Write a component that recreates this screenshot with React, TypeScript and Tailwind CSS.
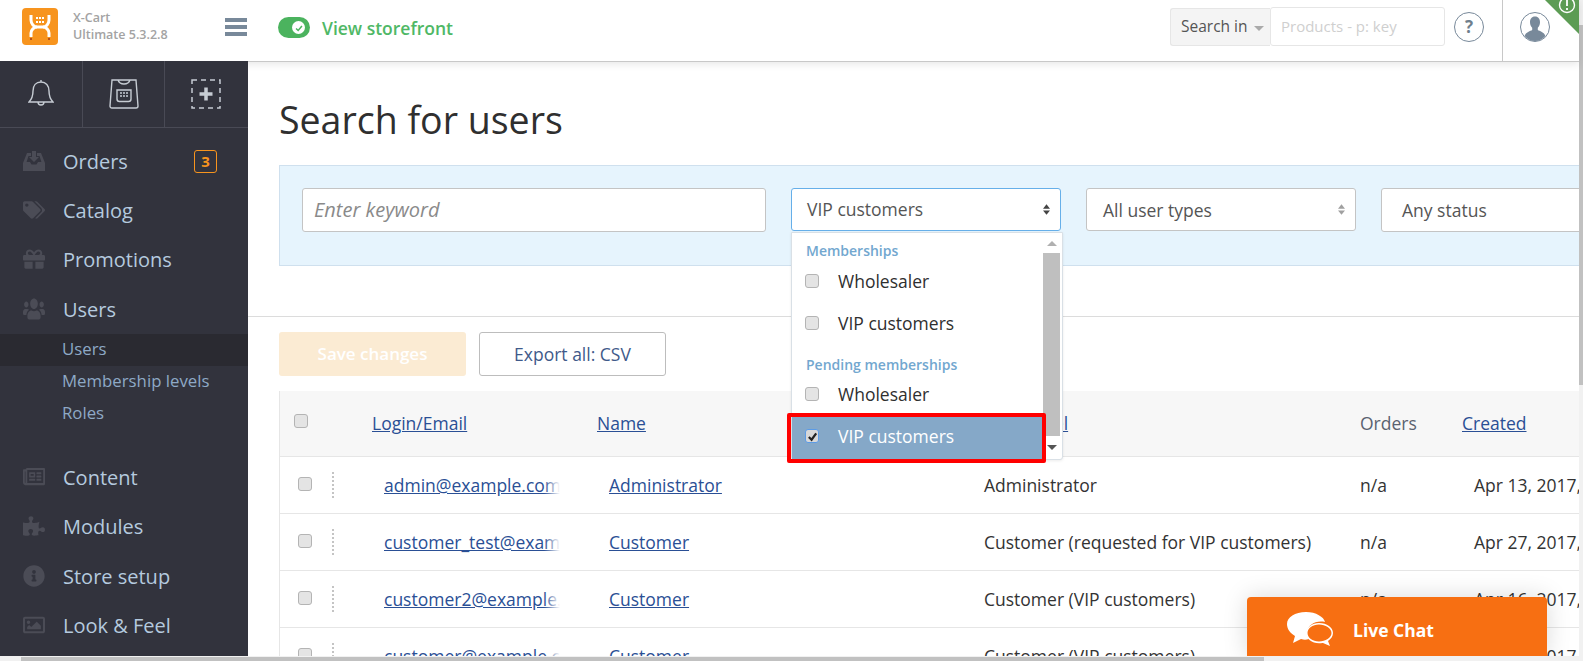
import { FaGift, FaInfoCircle, FaPuzzlePiece, FaRegImage, FaRegNewspaper, FaTags, FaUsers } from "react-icons/fa";
import type { ReactNode } from "react";

function InboxIcon() {
  return (
    <svg viewBox="0 0 22 20" className="h-[20px] w-[22px]" fill="#4b4c56">
      <path d="M4 2h4v3H5.500L3.600 11H7l1.500 2.500h5L15 11h3.400l-1.900-6H14V2h4l4 10v8H0v-8z" />
      <path d="M9 0h4v6h3l-5 5-5-5h3z" />
    </svg>
  );
}

const mainNav: { label: string; icon: ReactNode }[] = [
  { label: "Orders", icon: <InboxIcon /> },
  { label: "Catalog", icon: <FaTags size={22} color="#4b4c56" /> },
  { label: "Promotions", icon: <FaGift size={22} color="#4b4c56" /> },
  { label: "Users", icon: <FaUsers color="#4b4c56" className="h-[24px] w-[22px]" preserveAspectRatio="none" /> },
];

const lowerNav: { label: string; icon: ReactNode }[] = [
  { label: "Content", icon: <FaRegNewspaper color="#4b4c56" className="h-[23px] w-[22px]" preserveAspectRatio="none" /> },
  { label: "Modules", icon: <FaPuzzlePiece size={22} color="#4b4c56" /> },
  { label: "Store setup", icon: <FaInfoCircle size={22} color="#4b4c56" /> },
  { label: "Look & Feel", icon: <FaRegImage size={22} color="#4b4c56" /> },
];

const rows = [
  { email: "admin@example.com", name: "Administrator", level: "Administrator", date: "Apr 13, 2017, 10:15" },
  { email: "customer_test@example.com", name: "Customer", level: "Customer (requested for VIP customers)", date: "Apr 27, 2017, 12:40" },
  { email: "customer2@example.com", name: "Customer", level: "Customer (VIP customers)", date: "Apr 16, 2017, 09:20" },
  { email: "customer@example.com", name: "Customer", level: "Customer (VIP customers)", date: "Apr 13, 2017, 10:15" },
];

function Checkbox({ checked }: { checked?: boolean }) {
  if (checked) {
    return (
      <span className="flex h-[14px] w-[14px] items-center justify-center rounded-[3px] border border-[#5b9be6] bg-[#d8d8d8]">
        <svg viewBox="0 0 12 12" className="h-[11px] w-[11px]" fill="none" stroke="#222" strokeWidth="2.4">
          <path d="M2 6.500l3 3 5-7" />
        </svg>
      </span>
    );
  }
  return <span className="block h-[14px] w-[14px] rounded-[3px] border border-[#b4b4b4] bg-[#e4e4e4]" />;
}

function Logo() {
  return (
    <svg viewBox="0 0 36 37" className="h-[37px] w-[36px]">
      <rect width="36" height="37" rx="4" fill="#f7941e" />
      <g fill="none" stroke="#fff" strokeWidth="3">
        <path d="M9 7v5c0 4 3 7 6 7h6c3 0 6-3 6-7V7" />
        <path d="M15 19c-3 0-6 3-6 6v4M21 19c3 0 6 3 6 6v4" />
      </g>
      <g fill="#fff">
        <rect x="14" y="9" width="2" height="2" />
        <rect x="17" y="9" width="2" height="2" />
        <rect x="20" y="9" width="2" height="2" />
        <rect x="14" y="13" width="2" height="2" />
        <rect x="17" y="13" width="2" height="2" />
        <rect x="20" y="13" width="2" height="2" />
      </g>
      <rect x="8" y="30" width="2" height="2" fill="#b5521a" />
      <rect x="26" y="30" width="2" height="2" fill="#b5521a" />
    </svg>
  );
}

function Header() {
  return (
    <header className="relative z-10 flex h-[62px] shrink-0 items-start overflow-hidden border-b border-[#c8c8c8] bg-white shadow-[0_2px_8px_rgba(0,0,0,0.1)]">
      <div className="ml-[22px] mt-[8px]">
        <Logo />
      </div>
      <div className="ml-[15px] mt-[9px] w-[98px] text-[12.500px] font-semibold leading-[17px] text-[#a3a3a3]">
        <div>X-Cart</div>
        <div>Ultimate 5.3.2.8</div>
      </div>
      <div className="ml-[54px] mt-[18px] flex flex-col gap-[3px]">
        <span className="h-[4px] w-[22px] bg-[#78899a]" />
        <span className="h-[4px] w-[22px] bg-[#78899a]" />
        <span className="h-[4px] w-[22px] bg-[#78899a]" />
      </div>
      <div className="ml-[31px] mt-[17px] flex h-[21px] w-[32px] items-center justify-end rounded-full bg-[#4bb35e] pr-[5px]">
        <span className="flex h-[13px] w-[13px] items-center justify-center rounded-full bg-white">
          <svg viewBox="0 0 12 12" className="h-[10px] w-[10px]" fill="none" stroke="#4bb35e" strokeWidth="1.800">
            <path d="M2.500 6.500l2.500 2.500 4.500-5.500" />
          </svg>
        </span>
      </div>
      <a className="ml-[12px] mt-[16px] text-[17.500px] font-semibold leading-[24px] text-[#4fb866]">View storefront</a>

      <div className="ml-auto mt-[8px] flex h-[38px] w-[100px] items-center rounded-l-[3px] border border-r-0 border-[#e6e6e6] bg-[#f4f4f4] pl-[10px] text-[15.500px] font-medium text-[#555]">
        Search in
        <span className="ml-[6px] mt-[3px] h-0 w-0 border-x-[5px] border-t-[5px] border-x-transparent border-t-[#aaa]" />
      </div>
      <div className="mt-[7px] flex h-[39px] w-[175px] items-center rounded-[3px] border border-[#e6e6e6] pl-[10px] text-[15px] text-[#cfcfcf]">
        Products - p: key
      </div>
      <div className="ml-[9px] mt-[12px] flex h-[30px] w-[30px] items-center justify-center rounded-full border border-[#78899a] text-[17px] font-bold text-[#6f7f8d]">
        ?
      </div>
      <div className="ml-[18px] h-[61px] w-px bg-[#c8c8c8]" />
      <svg viewBox="0 0 30 30" className="ml-[17px] mr-[29px] mt-[12px] h-[30px] w-[30px]">
        <circle cx="15" cy="15" r="14.500" fill="none" stroke="#78899a" />
        <path d="M15 4.500c3.400 0 5 2.600 5 5.700 0 2.400-1 4.400-2.200 5.600v2.200c1.600 1.100 6.600 2 7.600 6A14 14 0 0 1 15 29 14 14 0 0 1 4.600 24c1-4 6-4.900 7.600-6v-2.200c-1.200-1.200-2.200-3.200-2.200-5.600 0-3.100 1.600-5.700 5-5.700z" fill="#78899a" />
      </svg>
      <svg viewBox="0 0 34 34" className="absolute right-0 top-0 h-[34px] w-[34px]">
        <path d="M0 0h34v34z" fill="#5c9c54" />
        <circle cx="22" cy="5" r="7.500" fill="none" stroke="#fff" strokeWidth="1.400" />
        <path d="M22 0v6M22 8v2" stroke="#fff" strokeWidth="1.800" />
      </svg>
    </header>
  );
}

function NavItem({ label, icon, badge }: { label: string; icon: ReactNode; badge?: string }) {
  return (
    <div className="flex h-[49px] items-center pl-[23px] text-[20px] text-[#b5cadf]">
      <span className="-mt-[2px] flex w-[40px] shrink-0 items-center">{icon}</span>
      {label}
      {badge && (
        <span className="ml-auto mr-[31px] flex h-[23px] w-[23px] items-center justify-center rounded-[3px] border border-[#f7941e] text-[15px] font-bold text-[#f7941e]">
          {badge}
        </span>
      )}
    </div>
  );
}

function Sidebar() {
  return (
    <aside className="relative z-20 -mt-px w-[248px] shrink-0 bg-[#32333d]">
      <div className="flex h-[67px] border-b border-[#494a55]">
        <div className="flex w-[83px] items-center justify-center border-r border-[#494a55]">
          <svg viewBox="0 0 26 30" className="h-[30px] w-[26px]" fill="none" stroke="#c6ccd3" strokeWidth="1.400">
            <path d="M13 3c-5 0-8 3.500-8 9 0 6-2 9-4 11h24c-2-2-4-5-4-11 0-5.500-3-9-8-9zM13 1v2M10 23c0 2 1.500 3 3 3s3-1 3-3" />
          </svg>
        </div>
        <div className="flex w-[82px] items-center justify-center border-r border-[#494a55]">
          <svg viewBox="0 0 30 30" className="h-[30px] w-[30px]" fill="none" stroke="#c6ccd3" strokeWidth="1.400">
            <path d="M3 1h24l2 26c0 1-.5 2-2 2H3c-1.500 0-2-1-2-2zM9 1c1 3 3 4 6 4s5-1 6-4" />
            <path d="M8 11h14v9c0 1.500-1 2.500-2.500 2.500h-9C9 22.500 8 21.500 8 20z" />
            <path d="M11 14h2M14 14h2M17 14h2M11 17h2M14 17h2M17 17h2" strokeWidth="1.600" />
          </svg>
        </div>
        <div className="flex flex-1 items-center justify-center pr-[2px]">
          <svg viewBox="0 0 30 30" className="h-[30px] w-[30px]" fill="none" stroke="#c6ccd3">
            <rect x="1" y="1" width="28" height="28" strokeWidth="1.500" strokeDasharray="5 4" />
            <path d="M15 8.500v13M8.500 15h13" strokeWidth="3.500" />
          </svg>
        </div>
      </div>
      <nav className="pt-[9px]">
        <div className="[&>*:nth-child(4)]:pt-[2px]">
          <NavItem {...mainNav[0]} badge="3" />
          {mainNav.slice(1).map((item) => (
            <NavItem key={item.label} {...item} />
          ))}
        </div>
        <div className="mt-px text-[16.800px] text-[#8ea9c6]">
          <div className="flex h-[32px] items-center bg-[#2a2a31] pb-[2px] pl-[62px]">Users</div>
          <div className="flex h-[32px] items-center pb-[2px] pl-[62px]">Membership levels</div>
          <div className="flex h-[32px] items-center pb-[2px] pl-[62px]">Roles</div>
        </div>
        <div className="mt-[23px] [&>*:nth-child(3)]:mt-px">
          {lowerNav.map((item) => (
            <NavItem key={item.label} {...item} />
          ))}
        </div>
      </nav>
    </aside>
  );
}

function SelectArrows({ color }: { color: string }) {
  return (
    <svg viewBox="0 0 8 12" className="h-[11px] w-[7px]" fill={color}>
      <path d="M4 0l4 5H0zM4 12L0 7h8z" />
    </svg>
  );
}

function Option({ label, checked }: { label: string; checked?: boolean }) {
  return (
    <div className={`flex h-[42px] items-center pl-[13px] text-[17.500px] ${checked ? "bg-[#85a8c8] text-white" : "text-[#2f2f2f]"}`}>
      <Checkbox checked={checked} />
      <span className="ml-[19px]">{label}</span>
    </div>
  );
}

function MembershipDropdown() {
  return (
    <div className="absolute left-0 top-[44px] flex h-[228px] w-[272px] rounded-b-[3px] border border-[#d9e0e6] bg-white shadow-[0_1px_3px_rgba(0,0,0,0.08)]">
      <div className="w-[251px]">
        <div className="h-[27px] pl-[14px] pt-[9px] text-[14px] font-semibold leading-[18px] text-[#72a7cf]">Memberships</div>
        <Option label="Wholesaler" />
        <Option label="VIP customers" />
        <div className="h-[29px] pl-[14px] pt-[12px] text-[14px] font-semibold leading-[18px] text-[#72a7cf]">Pending memberships</div>
        <Option label="Wholesaler" />
        <div className="bg-[#85a8c8] pb-[2px]">
          <Option label="VIP customers" checked />
        </div>
      </div>
      <div className="flex w-[17px] flex-col items-center">
        <div className="flex h-[20px] w-full items-center justify-center">
          <span className="h-0 w-0 border-x-[5px] border-b-[5px] border-x-transparent border-b-[#b0b0b0]" />
        </div>
        <div className="h-[183px] w-full bg-[#bfbfbf]" />
        <div className="flex w-full flex-1 items-center justify-center">
          <span className="h-0 w-0 border-x-[5px] border-t-[5px] border-x-transparent border-t-[#555]" />
        </div>
      </div>
      {/* red highlight added on top of the screenshot */}
      <div className="absolute left-[-5px] top-[180px] h-[50px] w-[259px] rounded-[2px] border-[4px] border-[#ff0000]" />
    </div>
  );
}

function SearchPanel() {
  return (
    <section className="relative z-20 ml-[31px] flex h-[101px] items-start gap-[25px] border-y border-l border-[#cfe0ee] bg-[#e6f4fd] pl-[22px] pt-[22px] text-[17.500px] text-[#555]">
      <div className="flex h-[44px] w-[464px] shrink-0 items-center rounded-[3px] border border-[#c4c4c4] bg-white pl-[11px] text-[20px] italic text-[#8a8a8a]">
        Enter keyword
      </div>
      <div className="relative w-[270px] shrink-0">
        <div className="flex h-[43px] items-center justify-between rounded-[3px] border border-[#66afe9] bg-white pl-[15px] pr-[10px]">
          VIP customers
          <SelectArrows color="#444" />
        </div>
        <MembershipDropdown />
      </div>
      <div className="flex h-[43px] w-[270px] shrink-0 items-center justify-between rounded-[3px] border border-[#c4c4c4] bg-white pl-[16px] pr-[10px]">
        <span className="pt-[2px]">All user types</span>
        <SelectArrows color="#a0a0a0" />
      </div>
      <div className="flex h-[44px] w-[260px] shrink-0 items-center rounded-l-[3px] border border-[#c4c4c4] bg-white pl-[20px]">
        Any status
      </div>
    </section>
  );
}

function UsersTable() {
  return (
    <div className="ml-[31px] mt-[15px] w-[1400px] border-l border-[#e6e6e6] text-[17.500px]">
      <div className="grid h-[66px] grid-cols-[92px_225px_375px_388px_102px_1fr] items-center border-b border-[#e6e6e6] bg-[#f7f7f7]">
        <div className="pb-[6px] pl-[14px]">
          <Checkbox />
        </div>
        <a className="text-[#2a4f95] underline">Login/Email</a>
        <a className="text-[#2a4f95] underline">Name</a>
        <a className="text-[#2a4f95] underline">Access level</a>
        <span className="text-[#5a6270]">Orders</span>
        <a className="text-[#2a4f95] underline">Created</a>
      </div>
      {rows.map((row) => (
        <div key={row.email} className="grid h-[57px] grid-cols-[92px_225px_375px_388px_102px_1fr] items-center border-b border-[#e6e6e6] text-[#333]">
          <div className="flex items-center pl-[18px]">
            <div className="-mt-[2px]">
              <Checkbox />
            </div>
            <span className="ml-[20px] h-[26px] border-l-2 border-dotted border-[#c4c4c4]" />
          </div>
          <div className="relative overflow-hidden pl-[12px] pr-[37px]">
            <a className="block overflow-hidden whitespace-nowrap text-[#2a4f95] underline">{row.email}</a>
            <span className="absolute bottom-0 right-[37px] top-0 w-[16px] bg-gradient-to-r from-transparent to-white" />
          </div>
          <a className="pl-[12px] text-[#2a4f95] underline">{row.name}</a>
          <span className="pl-[12px]">{row.level}</span>
          <span>n/a</span>
          <span className="whitespace-nowrap pl-[12px]">{row.date}</span>
        </div>
      ))}
    </div>
  );
}

function LiveChat() {
  return (
    <div className="absolute left-[999px] top-[535px] flex h-[60px] w-[300px] items-start rounded-t-[4px] bg-[#f76f12] pl-[40px] pt-[15px] shadow-[0_0_24px_rgba(0,0,0,0.15)]">
      <svg viewBox="0 0 46 34" className="h-[34px] w-[46px]" fill="#fff">
        <path d="M19 0c10 0 18 5 19 10-9-2-18 3-18 11 0 2 .5 4 2 6-3 1-5 1-8 0l-8 4 2-7C3 21 0 17 0 12 0 5 8 0 19 0z" />
        <path d="M32 11c8 0 14 4.500 14 10 0 3-2 6-5 8l2 5-7-3c-1 0-3 .3-4 .3-7 0-13-4.500-13-10.300 0-5.500 6-10 13-10zm0 1.500c-6.500 0-11.500 3.800-11.500 8.500 0 4.700 5 8.500 11.500 8.500 6.500 0 12.500-3.800 12.500-8.500 0-4.700-6-8.500-12.500-8.500z" />
      </svg>
      <span className="ml-[20px] mt-[6px] text-[17.500px] font-bold leading-[24px] text-white">Live Chat</span>
    </div>
  );
}

export default function App() {
  return (
    <div className="flex h-[661px] w-[1583px] flex-col overflow-hidden bg-white font-['Open_Sans',sans-serif]">
      <div className="flex min-h-0 flex-1">
        <div className="flex min-w-0 flex-1 flex-col">
          <Header />
          <div className="flex min-h-0 flex-1">
            <Sidebar />
            <main className="relative min-w-0 flex-1 overflow-hidden">
              <h1 className="ml-[31px] h-[103px] pt-[36px] text-[37.500px] font-normal leading-[44px] text-[#2f2f2f]">Search for users</h1>
              <SearchPanel />
              <div className="mt-[50px] border-t border-[#dcdcdc]" />
              <div className="ml-[31px] mt-[15px] flex gap-[13px]">
                <button className="h-[44px] w-[187px] rounded-[3px] bg-[#fbebd3] text-[17px] font-semibold text-white">Save changes</button>
                <button className="h-[44px] w-[187px] rounded-[3px] border border-[#bdbdbd] text-[17.500px] text-[#3f5a8a]">Export all: CSV</button>
              </div>
              <UsersTable />
              <LiveChat />
            </main>
          </div>
        </div>
        <div className="flex w-[4px] shrink-0 flex-col bg-[#f1f1f1]">
          <div className="mt-[25px] h-[360px] bg-[#c1c1c1]" />
        </div>
      </div>
      <div className="h-[5px] shrink-0 bg-[#f1f1f1] pl-[21px] pt-[1px]">
        <div className="h-[4px] w-[1243px] bg-[#c1c1c1]" />
      </div>
    </div>
  );
}
